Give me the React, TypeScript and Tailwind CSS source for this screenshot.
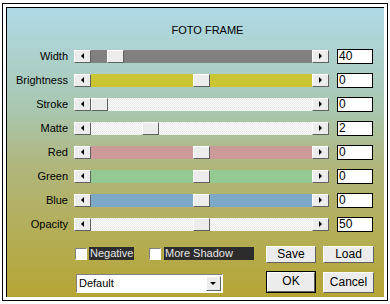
const sliders = [
  { label: "Width", value: "40", thumb: 16, track: "bg-[#808080]" },
  { label: "Brightness", value: "0", thumb: 102, track: "bg-[#c9c533]" },
  { label: "Stroke", value: "0", thumb: 0, track: "checker" },
  { label: "Matte", value: "2", thumb: 51, track: "checker" },
  { label: "Red", value: "0", thumb: 102, track: "bg-[#cc9a98]" },
  { label: "Green", value: "0", thumb: 102, track: "bg-[#94c994]" },
  { label: "Blue", value: "0", thumb: 102, track: "bg-[#7ea8c8]" },
  { label: "Opacity", value: "50", thumb: 102, track: "checker" },
];

const raised =
  "bg-[#ececec] border border-t-white border-l-white border-r-[#606060] border-b-[#606060]";

function Arrow({ dir }: { dir: "left" | "right" | "down" }) {
  const pts =
    dir === "left" ? "5,0 5,6 2,3" : dir === "right" ? "2,0 2,6 5,3" : "0,2 6,2 3,5";
  return (
    <svg width="7" height="7" viewBox="0 0 7 7">
      <polygon points={pts} fill="#000" />
    </svg>
  );
}

function Slider({ thumb, track }: { thumb: number; track: string }) {
  const trackCls =
    track === "checker"
      ? "bg-[conic-gradient(#ffffff_25%,#e8e8e8_0_50%,#ffffff_0_75%,#e8e8e8_0)] bg-[length:2px_2px]"
      : track;
  return (
    <div className="flex h-[13px] w-[255px] ml-[6px]">
      <div className={`${raised} w-[17px] h-[13px] flex items-center justify-center`}>
        <Arrow dir="left" />
      </div>
      <div className={`relative w-[221px] h-[13px] ${trackCls}`}>
        <div
          className={`${raised} absolute top-0 w-[17px] h-[13px]`}
          style={{ left: thumb }}
        />
      </div>
      <div className={`${raised} w-[17px] h-[13px] flex items-center justify-center`}>
        <Arrow dir="right" />
      </div>
    </div>
  );
}

function Check({ label, width }: { label: string; width: string }) {
  return (
    <div className="flex items-center">
      <div className="w-[12px] h-[12px] bg-white border border-t-[#808080] border-l-[#808080] border-r-white border-b-white" />
      <div className={`ml-[2px] h-[13px] ${width} bg-[#2c2c2c] text-[#e8e8e8] leading-[13px] pl-[1px]`}>
        {label}
      </div>
    </div>
  );
}

export default function App() {
  return (
    <div
      className="w-[390px] h-[304px] bg-white pt-[3px] pl-[2px] text-[11px] text-black"
      style={{ fontFamily: '"Liberation Sans", Arial, sans-serif' }}
    >
      <div className="w-[386px] h-[298px] border border-black bg-white p-[3px]">
        <div className="w-[378px] h-[290px] border-t border-l border-black bg-[linear-gradient(180deg,#afd9e6_0%,#a9c7b0_35%,#b0b67c_55%,#b6a534_100%)] flex flex-col">
          {/* Title */}
          <div className="mt-[16px] h-[13px] leading-[13px] pl-[24px] text-center">
            FOTO FRAME
          </div>

          {/* Sliders */}
          <div className="mt-[12px] flex flex-col gap-[9px]">
            {sliders.map((s) => (
              <div key={s.label} className="flex items-center h-[15px]">
                <div className="w-[61px] text-right leading-[13px]">{s.label}</div>
                <Slider thumb={s.thumb} track={s.track} />
                <div className="ml-[8px] w-[36px] h-[15px] bg-white border border-black text-[12px] leading-[13px] pl-[1px]">
                  {s.value}
                </div>
              </div>
            ))}
          </div>

          {/* Options and buttons */}
          <div className="mt-[14px] flex">
            <div className="ml-[68px] w-[191px] flex flex-col">
              <div className="mt-[1px] flex gap-[15px]">
                <Check label="Negative" width="w-[45px]" />
                <div className="flex items-center">
                  <div className="w-[12px] h-[12px] bg-white border border-t-[#808080] border-l-[#808080] border-r-white border-b-white" />
                  <div className="ml-[3px] h-[13px] w-[90px] bg-[#2c2c2c] text-[#e8e8e8] leading-[13px] pl-[1px]">
                    More Shadow
                  </div>
                </div>
              </div>
              <div className="mt-[14px] ml-[1px] w-[147px] h-[19px] bg-white border border-t-[#808080] border-l-[#808080] border-r-white border-b-white flex items-center justify-between pr-[1px]">
                <span className="pl-[2px] leading-[13px]">Default</span>
                <div className={`${raised} w-[15px] h-[15px] flex items-center justify-center`}>
                  <Arrow dir="down" />
                </div>
              </div>
            </div>
            <div className="grid grid-cols-[50px_51px] gap-x-[7px] gap-y-[7px] text-[12px]">
              <button className={`${raised} h-[17px] leading-[13px]`}>Save</button>
              <button className={`${raised} h-[17px] leading-[13px]`}>Load</button>
              <div className="border border-black h-[22px]">
                <button className={`${raised} w-full h-full leading-[13px]`}>OK</button>
              </div>
              <button className={`${raised} h-[21px] mt-[1px] leading-[13px]`}>Cancel</button>
            </div>
          </div>
        </div>
      </div>
    </div>
  );
}
